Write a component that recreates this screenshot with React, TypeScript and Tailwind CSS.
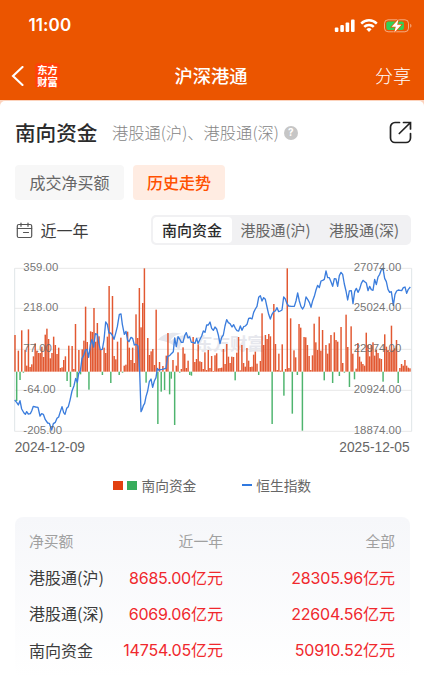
import * as React from "react";

const BARS = [
  110, -88, 63, -25, 124, -3, 65, 18, 127, 14, 22, 46, 85, 63, 56, 56, 75, 44,
  111, 129, 98, 40, 56, 105, 80, 53, 72, 11, 13, 35, 46, -28, 78, -46, 77, 8,
  143, -77, 65, -8, 67, 93, 195, 89, -54, 121, 119, 191, 90, 146, 106, 68, -10,
  72, 56, 105, 257, -34, 227, 47, 37, 90, -10, 102, -3, 18, 21, 120, 72, 35, 72,
  26, 172, 101, 251, 133, 206, 310, -33, 101, 50, 61, 68, 20, 186, -157, 29,
  -60, 17, -55, 48, 116, -68, -21, 35, -160, 18, 58, -3, 8, 73, 54, 11, 33, -10,
  -12, 104, 29, 38, 82, 31, 29, 8, 58, 5, 65, 11, 47, 2, 49, 55, 10, 11, 12, 68,
  23, 83, 45, 26, 45, 44, -26, 57, 104, 4, 80, 26, 15, 71, 33, 14, 15, 51, 60,
  24, -10, 32, 175, 80, 110, 98, 113, 106, -157, 203, 83, 5, 54, 3, 82, -72, 8,
  310, 11, 160, -126, 64, 43, -10, 143, 132, -177, 104, 103, 80, 47, 5, 49, 144,
  88, 65, 165, 63, 125, -26, 80, 54, 85, 110, -34, 118, 95, 90, -13, 134, 26,
  -3, 171, 74, -46, 136, 54, -23, 9, 86, 45, 30, 23, 18, 117, 80, 46, 80, 88,
  48, 66, 56, 40, 38, -30, 112, 75, 65, 60, 138, 65, 70, 95, -34, 11, 23, 18,
  35, 18, 12, 10,
];

const INDEX_LINE = `
  44,435 50,442 55,450 60,437 65,462 72,474 76,478 80,470 85,477 91,476 95,468
  100,454 107,456 114,457 120,483 125,476 130,478 136,494 143,504 148,505
  155,525 160,506 166,502 171,490 176,486 181,470 186,455 191,473 195,478
  200,460 205,455 210,436 216,408 222,392 227,370 232,382 236,355 241,348
  246,310 251,302 256,285 261,283 266,307 271,270 276,253 281,276 286,236
  292,238 296,262 301,284 307,283 312,255 317,201 322,208 327,234 332,234
  337,241 342,253 347,235 352,215 358,178 363,177 367,208 373,238 378,229
  383,256 387,260 393,247 398,250 403,270 408,268 414,273 419,350 423,470
  426,464 430,452 434,445 438,425 443,408 448,380 453,372 458,397 463,378
  468,368 472,340 476,345 486,343 498,340 503,304 509,302 514,296 520,290
  524,249 529,275 534,245 539,252 544,262 549,262 554,242 559,233 564,249
  569,245 574,262 579,262 585,265 590,250 594,265 599,255 605,243 610,228
  615,232 620,210 625,210 630,201 635,220 640,226 645,216 650,222 655,240
  660,266 665,247 670,240 675,213 680,194 685,203 690,206 696,216 701,209
  706,220 711,227 716,228 721,213 726,226 731,215 736,213 741,208 746,190
  751,189 756,192 761,172 766,162 771,154 776,127 781,122 786,138 791,128
  796,133 801,156 806,178 811,192 816,178 821,170 826,168 831,158 836,170
  841,168 846,165 851,126 856,132 861,146 866,153 874,154 883,154 888,138
  893,114 898,138 903,155 908,162 913,153 918,126 923,133 928,142 933,157
  938,137 943,124 948,105 953,91 958,98 963,78 968,76 973,73 978,48 983,68
  988,68 993,80 998,94 1003,71 1008,72 1013,94 1018,62 1023,52 1028,58 1033,87
  1038,108 1043,135 1048,108 1054,107 1059,146 1064,110 1069,100 1074,112
  1079,102 1084,85 1089,76 1094,80 1099,84 1104,107 1109,94 1114,104 1119,106
  1124,73 1129,89 1134,66 1139,58 1144,44 1149,40 1154,70 1159,80 1164,103
  1169,112 1174,110 1180,151 1185,118 1190,108 1195,105 1200,106 1205,107
  1210,98 1215,96 1220,115 1225,103 1231,96
`;

const GRID = [
  { y: 40, left: "359.00", right: "27074.00" },
  { y: 160, left: "218.00", right: "25024.00" },
  { y: 283, left: "77.00", right: "22974.00" },
  { y: 406, left: "-64.00", right: "20924.00" },
  { y: 529, left: "-205.00", right: "18874.00" },
];

const ROWS = [
  { name: "港股通(沪)", year: "8685.00", all: "28305.96" },
  { name: "港股通(深)", year: "6069.06", all: "22604.56" },
  { name: "南向资金", year: "14754.05", all: "50910.52" },
];

const ZERO = 350;

const StatusBar = () => (
  <div className="flex h-[51px] items-center justify-between pl-[28.5px] pr-[12px]">
    <span className="font-['Inter'] text-[17px] font-semibold tracking-[0.1px]">
      11:00
    </span>
    <svg width="78" height="16" viewBox="0 0 78 16" fill="none">
      <g fill="#fff">
        <rect x="0.8" y="9.5" width="3.6" height="4.5" rx="1" />
        <rect x="6.3" y="7" width="3.6" height="7" rx="1" />
        <rect x="11.6" y="4.5" width="3.6" height="9.5" rx="1" />
        <rect x="17" y="1.5" width="3.6" height="12.5" rx="1" />
      </g>
      <g stroke="#fff" strokeWidth="2.5">
        <path d="M27.2 5.6a11 11 0 0 1 15.6 0" />
        <path d="M30.2 8.9a6.8 6.8 0 0 1 9.6 0" />
      </g>
      <path d="M35 14l-2.6-2.7a3.700 3.700 0 0 1 5.200 0z" fill="#fff" />
      <rect x="50.5" y="1.8" width="24" height="12" rx="3.6" stroke="#fff" strokeOpacity=".5" />
      <path d="M76.2 5.8v4c1.7-.6 1.7-3.400 0-4z" fill="#fff" fillOpacity=".5" />
      <rect x="52.3" y="3.5" width="17.6" height="8.6" rx="2" fill="#30d158" />
      <path
        d="M64.6 1.2l-7 7.6h4.2l-1.6 5.9 7.2-7.900h-4.200z"
        fill="#fff"
        stroke="#eb5500"
        strokeWidth="1.4"
        paintOrder="stroke"
      />
    </svg>
  </div>
);

const NavBar = () => (
  <div className="grid h-[49px] grid-cols-3 items-center pl-[11px] pr-[13px]">
    <div className="flex items-center gap-[11px]">
      <svg width="13" height="20" viewBox="0 0 13 20" fill="none">
        <path d="M11.5 1L2 10l9.5 9" stroke="#fff" strokeWidth="2.1" strokeLinecap="round" />
      </svg>
      <div className="flex h-[25px] w-[25px] flex-col items-center justify-center rounded-[4px] bg-[#ff4208] font-['Noto_Sans_CJK_SC'] text-[10.3px] leading-[11.5px] font-bold">
        <span>东方</span>
        <span>财富</span>
      </div>
    </div>
    <div className="text-center text-[18.3px] font-medium">沪深港通</div>
    <div className="text-right text-[18px] font-light">分享</div>
  </div>
);

const Heading = () => (
  <div className="flex h-[63px] items-center pl-[15px] pr-[12px]">
    <h1 className="text-[20.6px] font-medium text-[#2b2b2b]">南向资金</h1>
    <span className="ml-[14.5px] text-[16.3px] font-light whitespace-nowrap text-[#858585]">
      港股通(沪)、港股通(深)
    </span>
    <div className="ml-[5px] flex h-[14px] w-[14px] items-center justify-center rounded-full bg-[#c6c6c6] font-['Inter'] text-[10px] font-bold text-white">
      ?
    </div>
    <svg className="ml-auto" width="23" height="23" viewBox="0 0 23 23" fill="none">
      <g stroke="#222" strokeWidth="1.7" strokeLinecap="round">
        <path d="M10.5 1.500H6A4.500 4.500 0 0 0 1.500 6v11A4.500 4.500 0 0 0 6 21.500h11a4.500 4.500 0 0 0 4.500-4.500v-4.500" />
        <path d="M14.500 1.500h7V8M21 2L10.300 12.500" />
      </g>
    </svg>
  </div>
);

const Chart = () => (
  <svg className="block" width="424" height="206" viewBox="0 0 1272 618">
    {GRID.map((g) => (
      <path key={g.y} d={`M44 ${g.y}H1235`} stroke="#e8e8e8" strokeWidth="3" />
    ))}
    <path d="M44 40V529M1235 40V529" stroke="#dfe5e8" strokeWidth="3" />
    <g fill="#e6e7ed">
      <path d="M474 254c18-20 46-24 70-18-20 4-30 12-32 22 16-14 36-20 64-16-24 6-34 18-38 44-16-20-38-26-64-32z" />
      <text x="586" y="284" fontSize="52" fontWeight="700" fontFamily="Noto Sans CJK SC, sans-serif">
        东方财富
      </text>
    </g>
    {BARS.map((v, i) => (
      <rect
        key={i}
        x={42.8 + i * 5.042}
        y={v > 0 ? ZERO - v : ZERO}
        width="4.4"
        height={Math.abs(v)}
        fill={v > 0 ? "#df4a20" : "#3fae62"}
        fillOpacity=".92"
      />
    ))}
    <polyline
      points={INDEX_LINE}
      fill="none"
      stroke="#3b7ddd"
      strokeWidth="4"
      strokeLinejoin="round"
    />
    <g fontFamily="Liberation Sans, sans-serif" fontSize="34.3" fill="#666" fillOpacity=".9">
      {GRID.map((g) => (
        <React.Fragment key={g.y}>
          <text x="70" y={g.y + 9}>{g.left}</text>
          <text x="1204" y={g.y + 9} textAnchor="end">{g.right}</text>
        </React.Fragment>
      ))}
    </g>
    <g fontFamily="Liberation Sans, sans-serif" fontSize="41.3" fill="#666">
      <text x="44" y="590">2024-12-09</text>
      <text x="1229" y="590" textAnchor="end">2025-12-05</text>
    </g>
  </svg>
);

const Amount = ({ value }: { value: string }) => (
  <div className="text-right text-[16px] whitespace-nowrap text-[#f0282d]">
    <span className="font-['Inter'] text-[16px] tracking-[-0.2px]">{value}</span>亿元
  </div>
);

const App: React.FC = () => {
  return (
    <div className="h-[676px] w-[424px] overflow-hidden bg-white font-['Noto_Sans_CJK_SC',sans-serif]">
      <header className="h-[100px] bg-[#eb5500] text-white">
        <StatusBar />
        <NavBar />
      </header>
      <div className="bg-[#fcd3bd] pt-px">
        <main className="rounded-t-[5px] bg-white">
          <Heading />
          <div className="mt-[1px] flex gap-[9px] pl-[15px] text-[16px]">
            <div className="flex h-[35px] w-[109px] items-center justify-center rounded-[4px] bg-[#f7f7f7] pb-[1px] text-[#666]">
              成交净买额
            </div>
            <div className="flex h-[35px] w-[92px] items-center justify-center rounded-[4px] bg-[#ffece2] pb-[1px] font-medium text-[#ff5000]">
              历史走势
            </div>
          </div>
          <div className="mt-[15px] flex h-[30px] items-center pl-[16px] pr-[13.5px]">
            <svg width="17" height="17" viewBox="0 0 17 17" fill="none">
              <g stroke="#555" strokeWidth="1.2" strokeLinecap="round">
                <rect x="1.3" y="2.5" width="14.4" height="13" rx="1.5" />
                <path d="M1.3 6.5h14.4M5 1v3.3M12 1v3.3M7.5 10.5h5" />
              </g>
            </svg>
            <span className="ml-[7.5px] text-[16px] text-[#3c3c3c]">近一年</span>
            <div className="ml-auto flex h-[30px] w-[260px] items-center rounded-[5px] bg-[#f1f1f3] p-[2px] text-[15px] whitespace-nowrap text-[#666]">
              <div className="flex h-[26px] w-[79px] items-center justify-center rounded-[4px] bg-white font-medium text-[#2b2b2b]">
                南向资金
              </div>
              <div className="w-[88px] text-center">港股通(沪)</div>
              <div className="w-[89px] text-center">港股通(深)</div>
            </div>
          </div>
          <div className="mt-[10px]">
            <Chart />
          </div>
          <div className="mt-[13px] flex h-[22px] items-center pl-[113px] text-[13.7px] text-[#666]">
            <div className="h-[9px] w-[10px] bg-[#e24010]" />
            <div className="ml-[4px] h-[9px] w-[10px] bg-[#38ac5c]" />
            <span className="ml-[4.5px]">南向资金</span>
            <div className="ml-[46px] h-[2.5px] w-[10px] bg-[#3079e0]" />
            <span className="ml-[4px]">恒生指数</span>
          </div>
          <section className="mr-[14px] ml-[15px] mt-[21px] rounded-[8px] bg-linear-to-b from-[#f6f7fa] to-white px-[14px] pt-[7px] pb-[10px]">
            <div className="grid h-[35px] grid-cols-[82px_112px_172px] items-center text-[14.8px] text-[#a0a0a0]">
              <span>净买额</span>
              <span className="text-right">近一年</span>
              <span className="text-right">全部</span>
            </div>
            {ROWS.map((row) => (
              <div
                key={row.name}
                className="grid h-[36.3px] grid-cols-[82px_112px_172px] items-center"
              >
                <span className="text-[16px] text-[#3c3c3c]">{row.name}</span>
                <Amount value={row.year} />
                <Amount value={row.all} />
              </div>
            ))}
          </section>
        </main>
      </div>
    </div>
  );
};

export default App;
